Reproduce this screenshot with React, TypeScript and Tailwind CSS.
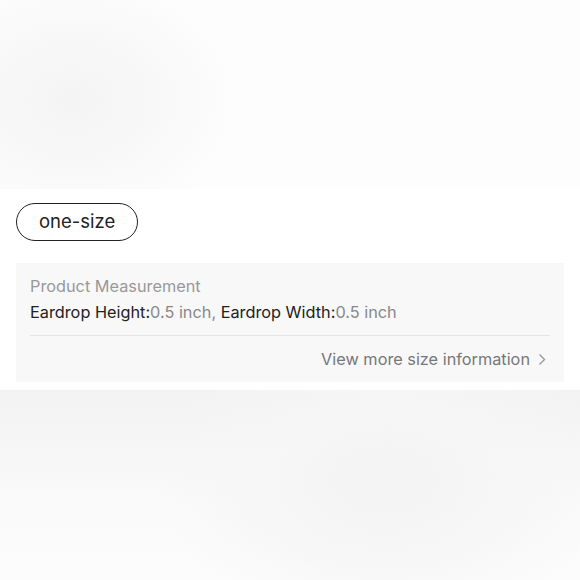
export default function App() {
  return (
    <div
      className="flex h-[580px] w-[580px] flex-col overflow-hidden bg-white text-[#222]"
      style={{ fontFamily: 'Inter, "Liberation Sans", sans-serif' }}
    >
      <div className="h-[189px] shrink-0 bg-[radial-gradient(ellipse_170px_130px_at_72px_100px,#f4f4f4_0%,#f8f8f8_50%,#fdfdfd_100%)]" />

      <section className="flex shrink-0 flex-col gap-[22px] px-4 pt-[14px] pb-[8px]">
        <div>
          <button className="h-[38px] rounded-full border-[1.5px] border-[#222] px-[22px] text-[18.5px] text-[#222]">
            one-size
          </button>
        </div>

        <div className="flex flex-col bg-[#f8f8f8] px-[14px] pt-[11px] pb-[11px]">
          <p className="text-[16.3px] leading-[24px] text-[#999]">Product Measurement</p>
          <p className="mt-[2px] text-[16.3px] leading-[24px]">
            <span className="text-[#222]">Eardrop Height:</span>
            <span className="text-[#888]">0.5 inch, </span>
            <span className="text-[#222]">Eardrop Width:</span>
            <span className="text-[#888]">0.5 inch</span>
          </p>
          <div className="mt-[11px] h-px bg-[#e6e6e6]" />
          <div className="mt-[11px] flex items-center justify-end gap-[8px] text-[16.3px] leading-[24px] text-[#777]">
            <span>View more size information</span>
            <svg width="8" height="13" viewBox="0 0 8 13" fill="none" className="mr-[4px]">
              <path d="M1.5 1.5 6.5 6.5 1.5 11.5" stroke="#999" strokeWidth="1.4" />
            </svg>
          </div>
        </div>
      </section>

      <div className="flex-1 bg-[radial-gradient(ellipse_230px_150px_at_385px_90px,#f3f3f3_0%,#f6f6f6_45%,transparent_100%),linear-gradient(to_bottom,#f2f2f2,#fafafa_60%,#fcfcfc)]" />
    </div>
  );
}
